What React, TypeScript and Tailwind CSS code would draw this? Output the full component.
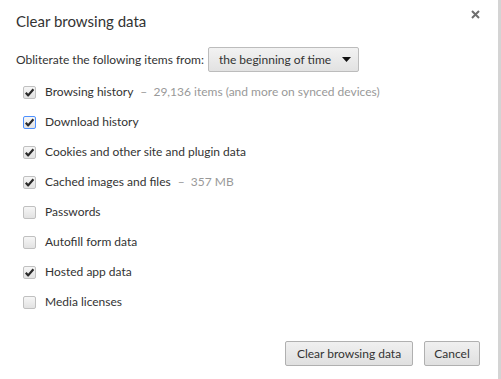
import { useState } from "react";

type Item = {
  label: string;
  extra?: string;
  checked: boolean;
  focused?: boolean;
};

const initialItems: Item[] = [
  { label: "Browsing history", extra: "29,136 items (and more on synced devices)", checked: true },
  { label: "Download history", checked: true, focused: true },
  { label: "Cookies and other site and plugin data", checked: true },
  { label: "Cached images and files", extra: "357 MB", checked: true },
  { label: "Passwords", checked: false },
  { label: "Autofill form data", checked: false },
  { label: "Hosted app data", checked: true },
  { label: "Media licenses", checked: false },
];

function CheckBox({ checked, focused }: { checked: boolean; focused?: boolean }) {
  return (
    <span
      className={
        focused
          ? "flex h-[13px] w-[13px] items-center justify-center rounded-[2px] border border-[#4d90fe] bg-gradient-to-b from-[#f6f6f6] to-[#e2e2e2]"
          : "flex h-[13px] w-[13px] items-center justify-center rounded-[2px] border border-[#c0c0c0] bg-gradient-to-b from-[#f6f6f6] to-[#e2e2e2]"
      }
    >
      {checked && (
        <svg width="11" height="11" viewBox="0 0 11 11">
          <path d="M1.8 5.8 L4.2 8.4 L9.4 2.2" fill="none" stroke="#2a2a2a" strokeWidth="2.2" strokeLinejoin="round" />
        </svg>
      )}
    </span>
  );
}

export default function App() {
  const [items, setItems] = useState<Item[]>(initialItems);

  const toggle = (i: number) => {
    setItems(items.map((it, idx) => (idx === i ? { ...it, checked: !it.checked } : it)));
  };

  return (
    <div className="flex h-[379px] w-[501px] bg-white font-['Lato',sans-serif] text-[#333]">
      <div className="relative flex flex-1 flex-col">
        <div className="flex h-[41px] items-center pl-4 pt-[1px] text-[15px] text-[#333]">
          Clear browsing data
        </div>
        <button className="absolute right-[18px] top-[9px] flex h-[10px] w-[10px] items-center justify-center">
          <svg width="9" height="9" viewBox="0 0 9 9">
            <path d="M1 1 L8 8 M8 1 L1 8" stroke="#6e6e6e" strokeWidth="2" />
          </svg>
        </button>

        <div className="mt-[6px] flex items-center pl-4 text-[12px]">
          <span>Obliterate the following items from:</span>
          <div className="ml-[4px] flex h-[25px] w-[151px] items-center justify-between rounded-[2px] border border-[#bcbcbc] bg-gradient-to-b from-[#f2f2f2] to-[#e2e2e2] pl-[10px] pr-[7px]">
            <span>the beginning of time</span>
            <svg width="9" height="5" viewBox="0 0 9 5">
              <path d="M0 0 H9 L4.5 5 Z" fill="#111" />
            </svg>
          </div>
        </div>

        <div className="mt-[5px] flex flex-col pl-[23px]">
          {items.map((it, i) => (
            <label
              key={it.label}
              className="flex h-[30px] cursor-default items-center gap-[9px] text-[12px]"
              onClick={() => toggle(i)}
            >
              <CheckBox checked={it.checked} focused={it.focused} />
              <span>
                {it.label}
                {it.extra && <span className="ml-[7px] text-[#999]">–&nbsp;&nbsp;{it.extra}</span>}
              </span>
            </label>
          ))}
        </div>

        <div className="mt-auto flex justify-end gap-[11px] pb-[13px] pr-[18px] text-[12px]">
          <button className="h-[25px] w-[128px] rounded-[2px] border border-[#b0b0b0] bg-gradient-to-b from-[#f0f0f0] to-[#e0e0e0] text-[#333]">
            Clear browsing data
          </button>
          <button className="h-[25px] w-[56px] rounded-[2px] border border-[#b0b0b0] bg-gradient-to-b from-[#f0f0f0] to-[#e0e0e0] text-[#333]">
            Cancel
          </button>
        </div>
      </div>
      <div className="w-[3px] bg-[#d4d4d4]" />
    </div>
  );
}
